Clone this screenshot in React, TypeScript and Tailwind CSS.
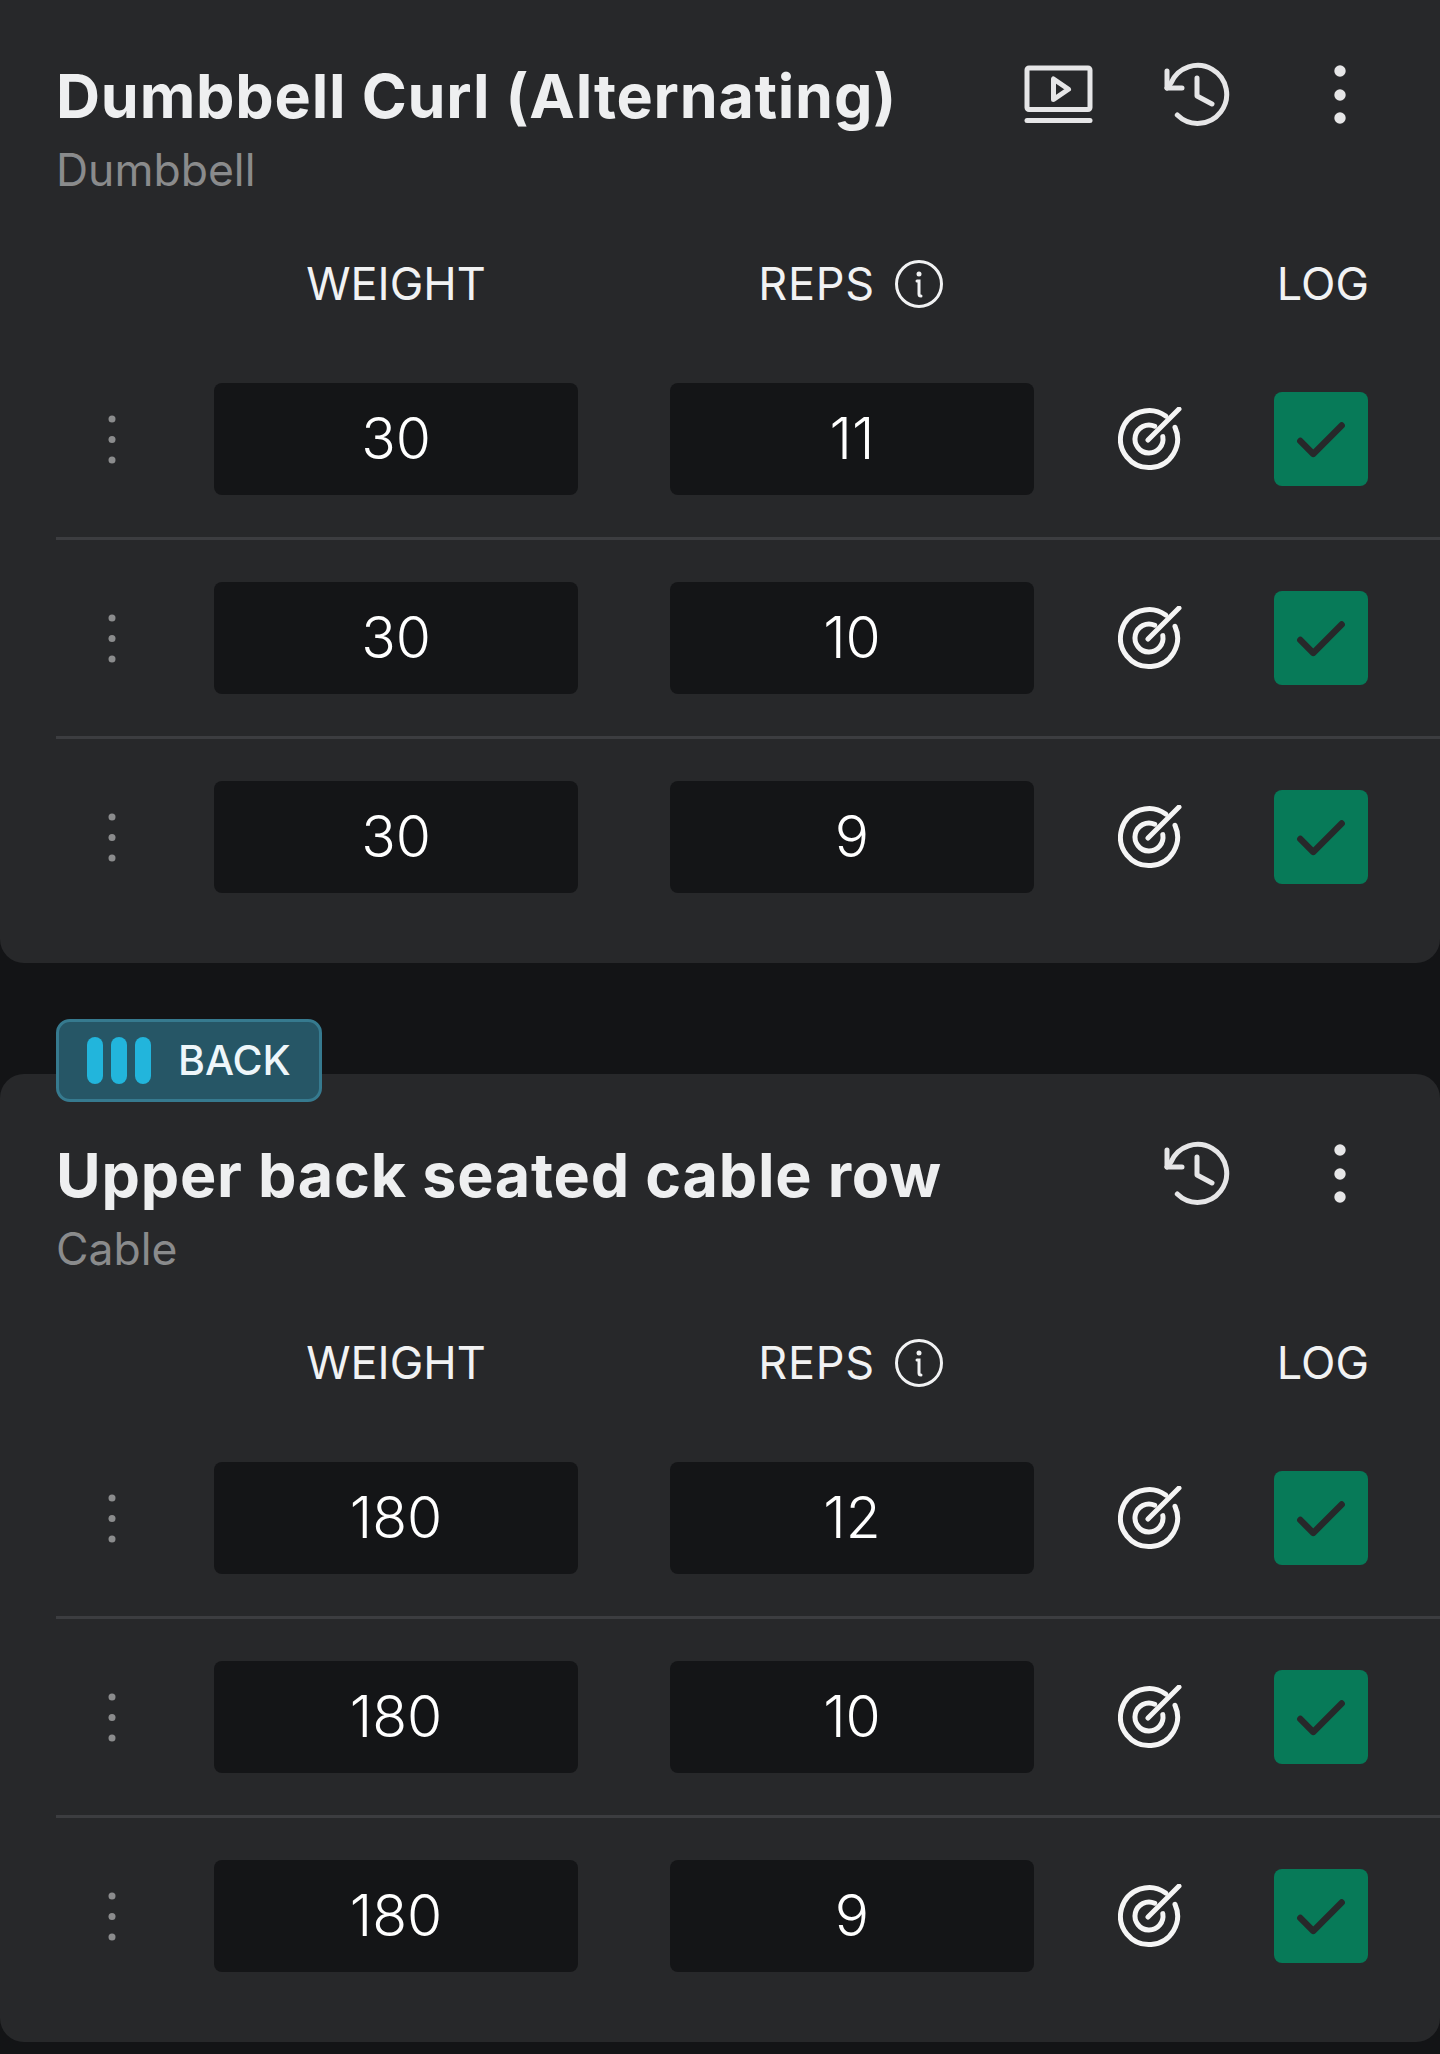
import { Check } from "lucide-react";

type SetRow = { weight: string; reps: string };

const firstSets: SetRow[] = [
  { weight: "30", reps: "11" },
  { weight: "30", reps: "10" },
  { weight: "30", reps: "9" },
];

const secondSets: SetRow[] = [
  { weight: "180", reps: "12" },
  { weight: "180", reps: "10" },
  { weight: "180", reps: "9" },
];

function VideoIcon() {
  return (
    <svg width="72" height="60" viewBox="0 0 72 60" fill="none" stroke="#e6e6e7" strokeWidth="5" strokeLinejoin="round" strokeLinecap="round">
      <rect x="3" y="3" width="63" height="41.5" rx="2" />
      <path d="M29.5 14v20.5l15-10.2z" />
      <path d="M3 55.5h63" />
    </svg>
  );
}

function HistoryIcon() {
  return (
    <svg width="68" height="68" viewBox="0 0 68 68" fill="none" stroke="#e6e6e7" strokeWidth="5" strokeLinecap="round" strokeLinejoin="round">
      <path d="M13.3 54A29 29 0 1 0 7 22L3 27" />
      <path d="M3 10v17h15" />
      <path d="M33 17v18l15 8" />
    </svg>
  );
}

function KebabIcon() {
  return (
    <svg width="12" height="60" viewBox="0 0 12 60" fill="#e6e6e7">
      <circle cx="6" cy="6" r="5.7" />
      <circle cx="6" cy="30" r="5.7" />
      <circle cx="6" cy="53" r="5.7" />
    </svg>
  );
}

function InfoIcon() {
  return (
    <svg width="48" height="48" viewBox="0 0 48 48" fill="none" stroke="#f1f2f3" strokeWidth="3" strokeLinecap="round">
      <circle cx="24" cy="24" r="22.5" />
      <circle cx="24" cy="14" r="2.5" fill="#f1f2f3" stroke="none" />
      <path d="M22 21h2v13c0 1 .8 2 2 2" />
    </svg>
  );
}

function TargetIcon() {
  return (
    <svg width="64" height="64" viewBox="0 0 64 64" fill="none" stroke="#f5f5f5" strokeWidth="5" strokeLinecap="round">
      <path d="M47.7 9A28.5 28.5 0 1 0 57 20.4" />
      <path d="M36.7 19.2A14 14 0 1 0 44.8 29.6" />
      <path d="M30 33 61 2" />
    </svg>
  );
}

function GripDots() {
  return (
    <svg width="8" height="49" viewBox="0 0 8 49" fill="#8b8c8d">
      <circle cx="4" cy="4" r="3.5" />
      <circle cx="4" cy="24.5" r="3.5" />
      <circle cx="4" cy="45" r="3.5" />
    </svg>
  );
}

function ColumnHeader() {
  return (
    <div className="grid grid-cols-[158px_364px_92px_364px_84px_1fr] items-center h-[48px] pl-[56px] pr-[71px] text-[45px] leading-none text-[#f1f2f3]">
      <div />
      <div className="text-center">WEIGHT</div>
      <div />
      <div className="flex items-center justify-center gap-[20px] pr-[3px]">
        <span className="tracking-[0.7px]">REPS</span>
        <span className="mt-[1px]">
          <InfoIcon />
        </span>
      </div>
      <div />
      <div className="text-right">LOG</div>
    </div>
  );
}

function Row({ row, last }: { row: SetRow; last: boolean }) {
  return (
    <div className={`ml-[56px] flex items-center py-[42px] ${last ? "" : "border-b-[3px] border-[#3c3d40]"}`}>
      <div className="w-[158px] flex justify-start pl-[52px]">
        <GripDots />
      </div>
      <div className="w-[364px] h-[112px] rounded-[8px] bg-[#141517] flex items-center justify-center text-[57px] font-light text-white">
        {row.weight}
      </div>
      <div className="w-[92px]" />
      <div className="w-[364px] h-[112px] rounded-[8px] bg-[#141517] flex items-center justify-center text-[57px] font-light text-white">
        {row.reps}
      </div>
      <div className="w-[84px]" />
      <TargetIcon />
      <div className="w-[92px]" />
      <div className="w-[94px] h-[94px] rounded-[8px] bg-[#077a58] flex items-center justify-center">
        <Check size={62} strokeWidth={2.5} color="#27282a" className="mt-[3px]" />
      </div>
    </div>
  );
}

function ExerciseCard({
  title,
  equipment,
  sets,
  video,
  className,
}: {
  title: string;
  equipment: string;
  sets: SetRow[];
  video?: boolean;
  className: string;
}) {
  return (
    <section className={`bg-[#27282a] ${className}`}>
      <div className="flex items-start justify-between pl-[56px] pr-[94px]">
        <div>
          <h2 className="text-[61px] leading-[80px] tracking-[0.8px] font-bold text-[#eeeff0]">{title}</h2>
          <p className="text-[44.5px] leading-[54px] text-[#8a8b8c] mt-[7px]">{equipment}</p>
        </div>
        <div className="flex items-center pt-[5px]">
          {video && <VideoIcon />}
          <div className="ml-[68px]">
            <HistoryIcon />
          </div>
          <div className="ml-[102px]">
            <KebabIcon />
          </div>
        </div>
      </div>
      <div className="mt-[62px]">
        <ColumnHeader />
      </div>
      <div className="mt-[34px]">
        {sets.map((row, i) => (
          <Row key={i} row={row} last={i === sets.length - 1} />
        ))}
      </div>
    </section>
  );
}

export default function App() {
  return (
    <div className="w-[1440px] h-[2054px] bg-[#131416] overflow-hidden font-['Inter',sans-serif]">
      <ExerciseCard
        title="Dumbbell Curl (Alternating)"
        equipment="Dumbbell"
        sets={firstSets}
        video
        className="h-[963px] rounded-b-[24px] pt-[56px]"
      />
      <div className="relative mt-[111px]">
        <div className="absolute z-10 left-[56px] -top-[55px] w-[266px] h-[83px] rounded-[14px] border-[3px] border-[#367a8f] bg-[#265666] flex items-center pl-[28px]">
          <div className="flex gap-[8px]">
            <span className="w-[16px] h-[47px] rounded-full bg-[#22b5dc]" />
            <span className="w-[16px] h-[47px] rounded-full bg-[#22b5dc]" />
            <span className="w-[16px] h-[47px] rounded-full bg-[#22b5dc]" />
          </div>
          <span className="ml-[27px] text-[41px] font-medium text-[#eef6fa] leading-none">BACK</span>
        </div>
        <ExerciseCard
          title="Upper back seated cable row"
          equipment="Cable"
          sets={secondSets}
          className="h-[968px] rounded-[24px] pt-[61px]"
        />
      </div>
    </div>
  );
}
